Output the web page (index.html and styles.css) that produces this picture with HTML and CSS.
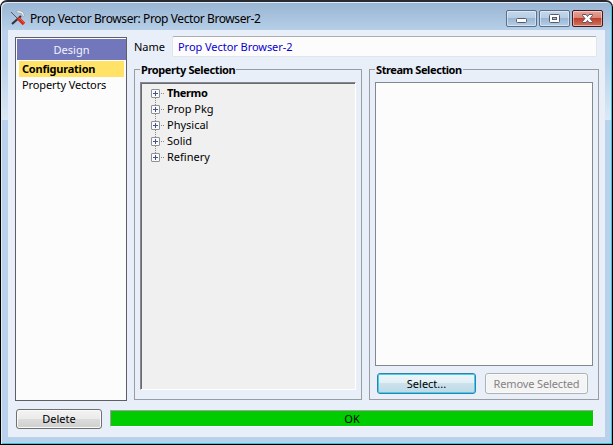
FILE: index.html
```html
<!DOCTYPE html>
<html lang="en">
<head>
<meta charset="utf-8">
<title>Prop Vector Browser</title>
<link rel="stylesheet" href="styles.css">
</head>
<body>
<div class="window">
  <header class="titlebar">
    <svg class="app-icon" width="16" height="16" viewBox="0 0 16 16">
      <path d="M1 2l6 6" stroke="#555" stroke-width="1"/>
      <path d="M11 6L2 14" stroke="#303438" stroke-width="2.200"/>
      <path d="M6 1.500l3-1 4 1.500 1.500 3.500-1.500 1-1.500-3-5-1z" fill="#eef2f5" stroke="#8b98a6" stroke-width=".6"/>
      <path d="M8 8l6 6" stroke="#d42c16" stroke-width="3.500"/>
      <path d="M8.500 7.500l6 6" stroke="#f16b50" stroke-width=".7"/>
    </svg>
    <h1 class="title">Prop Vector Browser: Prop Vector Browser-2</h1>
    <div class="controls">
      <span class="control"><svg width="29" height="15" viewBox="0 0 29 15"><rect x="9.500" y="7.500" width="10" height="4" rx="1" fill="#fff" stroke="#565b6a"/></svg></span>
      <span class="control"><svg width="29" height="15" viewBox="0 0 29 15"><rect x="9.500" y="3.500" width="10" height="8" rx="1" fill="#fff" stroke="#565b6a"/><rect x="12.500" y="6.500" width="4" height="2" fill="#a7c0db" stroke="#565b6a"/></svg></span>
      <span class="control close"><svg width="29" height="15" viewBox="0 0 29 15"><path d="M9.500 3.500h3.500l1.500 2 1.500-2h3.500v1l-2.500 3 2.500 3v1H16l-1.500-2-1.500 2H9.500v-1l2.500-3-2.500-3z" fill="#fff" stroke="#625563"/></svg></span>
    </div>
  </header>
  <main class="client">
    <div class="body">
      <nav class="sidebar">
        <div class="nav-head">Design</div>
        <div class="nav-item active">Configuration</div>
        <div class="nav-item">Property Vectors</div>
      </nav>
      <section class="content">
        <div class="name-row"><span class="name-label">Name</span><div class="name-field">Prop Vector Browser-2</div></div>
        <div class="groups">
          <fieldset class="group properties">
            <legend class="tight">Property Selection</legend>
            <ul class="tree">
              <li class="bold"><i class="expander"></i><span>Thermo</span></li>
              <li><i class="expander"></i><span>Prop Pkg</span></li>
              <li><i class="expander"></i><span>Physical</span></li>
              <li><i class="expander"></i><span>Solid</span></li>
              <li><i class="expander"></i><span>Refinery</span></li>
            </ul>
          </fieldset>
          <fieldset class="group streams">
            <legend>Stream Selection</legend>
            <div class="list"></div>
            <div class="actions">
              <button class="button focus">Select...</button>
              <button class="button remove" disabled>Remove Selected</button>
            </div>
          </fieldset>
        </div>
      </section>
    </div>
    <footer class="footer">
      <button class="button delete">Delete</button>
      <div class="status">OK</div>
    </footer>
  </main>
</div>
</body>
</html>
```
FILE: styles.css
```css
* { box-sizing: border-box; }
html, body { margin: 0; width: 613px; height: 445px; overflow: hidden; background: linear-gradient(#fff 8px, #000 8px); }
body { font: 11px/16px "Noto Sans", "Open Sans", sans-serif; color: #000; }
.window {
  width: 613px; height: 445px; padding: 0 6px 6px 7px;
  border: 1px solid #000; border-top-width: 2px; border-top-color: #2b2930;
  border-radius: 7px 7px 0 0;
  box-shadow: inset 1px 1px 0 #dcebf8, inset -1px -1px 0 #35c5dc;
  background: linear-gradient(#98b4d2 0, #b9d1ea 30px, #b9d1ea 60px, #dce8f5 118px, #b9d1ea 118px);
}
.titlebar { height: 28px; display: flex; align-items: flex-start; padding: 8px 3px 0 2px; }
.app-icon { flex: none; fill: none; }
.title { margin: 0 0 0 4px; font-size: 12px; line-height: 17px; font-weight: 400; white-space: nowrap; letter-spacing: -.41px; }
.controls { display: flex; gap: 2px; margin-left: auto; }
.control { width: 31px; height: 17px; border: 1px solid #5d6e87; border-radius: 2px; background: linear-gradient(#c5d8eb 0, #b5cde5 46%, #98b5d3 48%, #b6cee7 100%); box-shadow: inset 0 0 0 1px #ffffff70; }
.control svg { display: block; }
.close { border-color: #471820; background: linear-gradient(#e6a49a 0, #d98475 46%, #bd3e29 48%, #d37461 100%); }
.client { width: 597px; height: 407px; padding: 6px 7px; background: #e8eff9; }
.body { display: grid; grid-template-columns: 113px 465px; column-gap: 6px; height: 365px; }
.sidebar { margin-top: 1px; width: 112px; height: 364px; padding: 1px 0 1px 1px; border: 1px solid #5d5f65; background: #fcfcfc; }
.nav-head { height: 21px; padding-top: 3px; background: #7277bb; color: #f2f3ff; text-align: center; }
.nav-item { height: 16px; padding-left: 3px; margin: 0 2px; white-space: nowrap; letter-spacing: -.1px; }
.active { margin-top: 1px; background: #ffe266; font-weight: 700; letter-spacing: -.22px; }
.name-row { display: flex; height: 22px; }
.name-label { width: 38px; padding: 3px 0 0; }
.name-field { width: 425px; height: 21px; padding: 2px 5px; border: 1px solid #e1e5ea; border-top-color: #abadb3; border-radius: 2px; background: #fcfcfc; color: #0a00d0; letter-spacing: -.05px; }
.groups { display: grid; grid-template-columns: 228px 230px; column-gap: 7px; margin-top: 11px; height: 332px; }
.group { position: relative; min-width: 0; margin: 0; padding: 12px 5px 0; border: 1px solid #999ca1; height: 331px; }
/* the caption sits over the frame line */
legend { position: absolute; left: 5px; top: -8px; height: 16px; padding: 0 1px; background: #e8eff9; font-weight: 700; white-space: nowrap; letter-spacing: -.42px; }
.tight { letter-spacing: -.37px; }
.tree { height: 308px; margin: 0; padding: 2px 0 0 10px; list-style: none; border: 1px solid; border-color: #85878c #fff #fff #85878c; box-shadow: inset 1px 1px 0 #696b70; background: #f0f0f0; }
.tree li { display: flex; height: 16px; }
.tree li span { margin-left: 7px; white-space: nowrap; }
.tree .bold { font-weight: 700; letter-spacing: -.35px; }
.expander { position: relative; width: 9px; height: 9px; margin-top: 4px; border: 1px solid #919191; border-radius: 1px; background: linear-gradient(#3c5593, #3c5593) center / 5px 1px no-repeat, linear-gradient(#3c5593, #3c5593) center / 1px 5px no-repeat, #fafafa; }
.expander::after { content: ""; position: absolute; left: 9px; top: 3px; width: 3px; border-top: 1px dotted #888; }
.tree li:not(:last-child) .expander::before { content: ""; position: absolute; left: 3px; top: 8px; height: 7px; border-left: 1px dotted #888; }
.list { height: 284px; border: 1px solid #828790; background: #fcfcfc; width: 218px; }
.actions { display: flex; gap: 9px; margin: 7px 0 0 2px; }
.button { font: inherit; height: 21px; padding: 0; border: 1px solid #707070; border-radius: 3px; background: linear-gradient(#f3f3f3, #ebebeb 48%, #dcdcdc 50%, #cfcfcf); box-shadow: inset 0 0 0 1px #fafafa; color: #000; white-space: nowrap; }
.focus { width: 99px; border-color: #397f9e; background: linear-gradient(#eef6f8, #e1eff5 48%, #cce2ec 50%, #bbdae7); box-shadow: inset 0 0 0 1px #3ed0f6; }
.remove { width: 103px; border-color: #adb2b5; background: #f4f4f4; color: #838383; letter-spacing: -.13px; }
.footer { display: flex; margin: 7px 0 0 1px; }
.delete { width: 86px; height: 20px; margin-top: 1px; }
.status { width: 484px; height: 17px; margin: 2px 0 0 8px; border: 1px solid #a0a0a0; border-right-color: #fff; border-bottom-color: #fff; background: #00cc00; text-align: center; line-height: 15px; }
```
